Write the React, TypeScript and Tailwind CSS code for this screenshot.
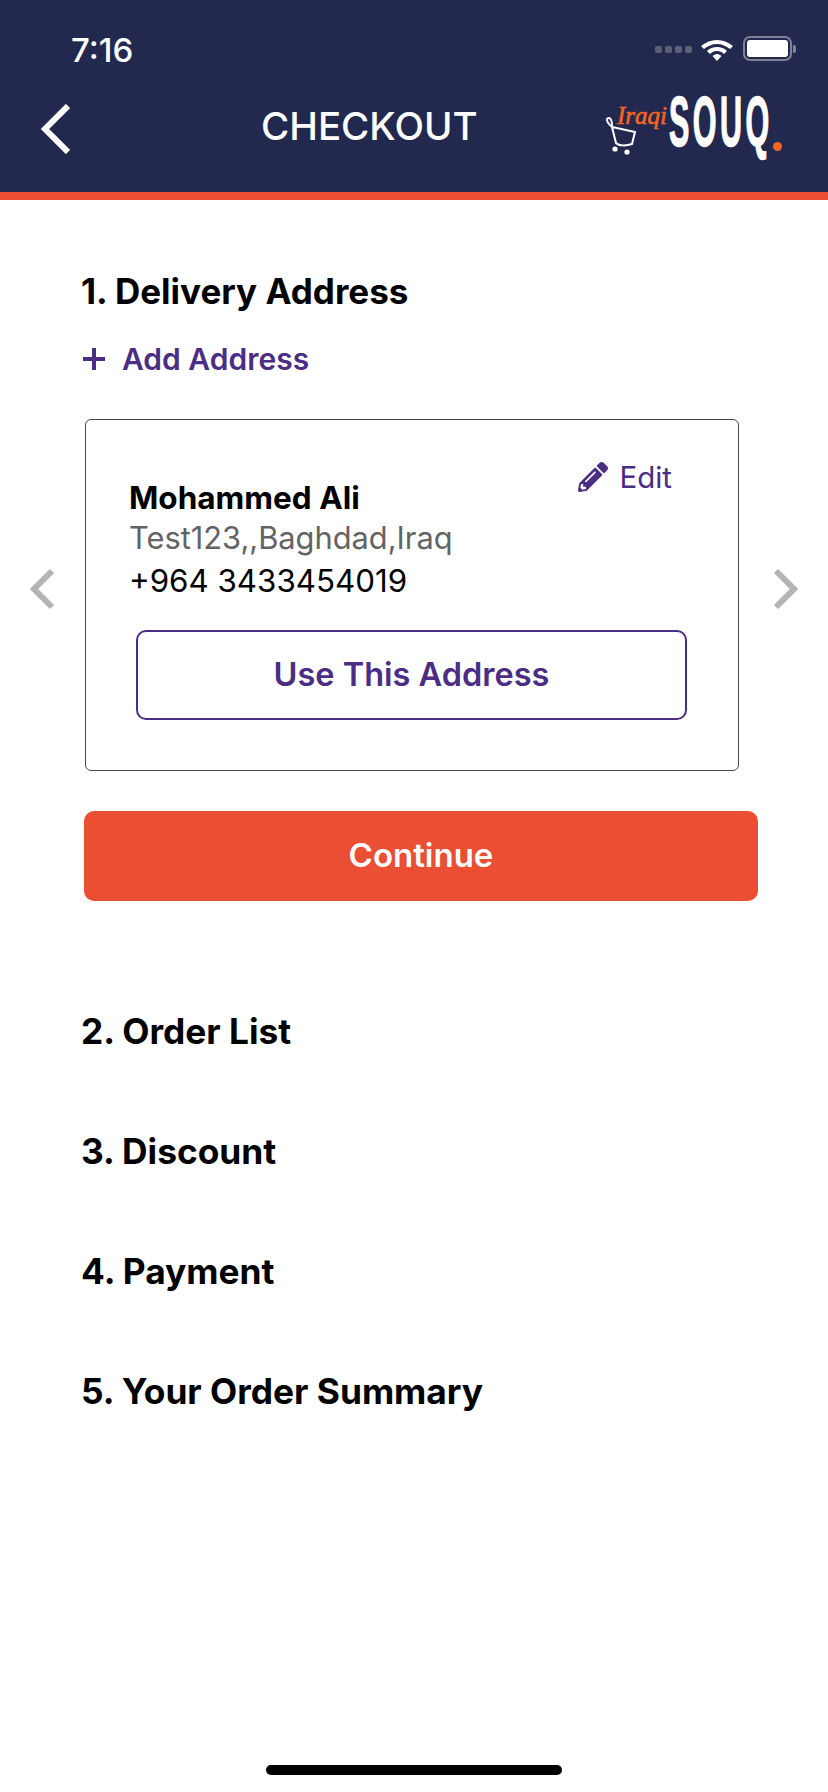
import { FaPencilAlt } from 'react-icons/fa';

const sections = ['2. Order List', '3. Discount', '4. Payment', '5. Your Order Summary'];

function Chevron({ dir, className }: { dir: 'left' | 'right'; className: string }) {
  return (
    <svg width="26" height="42" viewBox="0 0 26 42" fill="none" className={className}>
      <path
        d={dir === 'left' ? 'M23 3 L5 21 L23 39' : 'M3 3 L21 21 L3 39'}
        stroke="currentColor"
        strokeWidth="6"
      />
    </svg>
  );
}

function Logo() {
  return (
    <div className="relative w-[170px] h-[64px] shrink-0">
      <span className="absolute left-[11px] top-[4px] text-[25px] leading-[28px] italic text-[#f26522] [-webkit-text-stroke:0.6px_#f26522] font-['Liberation_Serif',serif]">
        Iraqi
      </span>
      <span className="absolute left-[63px] top-[-16px] text-[71px] leading-[80px] font-bold tracking-[8px] text-white origin-left scale-x-[0.43] [-webkit-text-stroke:1.5px_white] font-['Liberation_Sans',sans-serif]">
        SOUQ
      </span>
      <span className="absolute left-[167px] top-[44px] w-[9px] h-[9px] rounded-full bg-[#f26522]" />
      <svg width="32" height="40" viewBox="0 0 32 40" fill="none" className="absolute left-0 top-[18px]">
        <path
          d="M6 11 C0 6 0 2 3 2 C6 2 6 7 6 11 L29 16 L26 28 C20 30 13 30 10 27 L6 11"
          stroke="white"
          strokeWidth="2"
        />
        <circle cx="9" cy="33" r="2.6" fill="white" />
        <circle cx="21" cy="36" r="2.6" fill="white" />
      </svg>
    </div>
  );
}

export default function App() {
  return (
    <div className="w-[828px] h-[1792px] bg-white flex flex-col font-['Inter',sans-serif] text-black overflow-hidden">
      {/* Header */}
      <div className="h-[200px] shrink-0 bg-[#23294e] border-b-[8px] border-[#ea4e33] text-white">
        <div className="h-[98px] pl-[71px] pr-[32px] pt-[31px] flex items-start justify-between">
          <span className="text-[33px] leading-[38px] font-medium">7:16</span>
          <div className="flex items-center gap-[9px] pt-[5px]">
            <div className="flex gap-[3px] mt-[2px]">
              <span className="w-[7px] h-[7px] rounded-[2px] bg-[#5b6079]" />
              <span className="w-[7px] h-[7px] rounded-[2px] bg-[#5b6079]" />
              <span className="w-[7px] h-[7px] rounded-[2px] bg-[#5b6079]" />
              <span className="w-[7px] h-[7px] rounded-[2px] bg-[#5b6079]" />
            </div>
            <svg width="32" height="24" viewBox="0 0 32 24" fill="white">
              <path d="M16 3 C22 3 27 5 32 9 L29 12 C25 9 21 7 16 7 C11 7 7 9 3 12 L0 9 C5 5 10 3 16 3 Z" />
              <path d="M16 10 C20 10 23 11 26 14 L23 17 C21 15 19 14 16 14 C13 14 11 15 9 17 L6 14 C9 11 12 10 16 10 Z" />
              <path d="M16 17 C18 17 19 18 20.5 19 L16 24 L11.5 19 C13 18 14 17 16 17 Z" />
            </svg>
            <div className="flex items-center gap-[1px] ml-[1px]">
              <div className="w-[49px] h-[25px] rounded-[7px] border-[2px] border-[#7e8296] p-[2px]">
                <div className="w-full h-full rounded-[3px] bg-white" />
              </div>
              <span className="w-[3px] h-[8px] rounded-r-[2px] bg-[#7e8296]" />
            </div>
          </div>
        </div>
        <div className="relative flex items-start justify-between pl-[40px] pr-[52px]">
          <svg width="30" height="50" viewBox="0 0 30 50" fill="none" className="mt-[6px]">
            <path d="M28 2 L5 25 L28 48" stroke="white" strokeWidth="6" />
          </svg>
          <h1 className="absolute left-[261px] top-[5px] text-[38.5px] leading-[46px] font-medium">CHECKOUT</h1>
          <Logo />
        </div>
      </div>

      {/* Delivery address */}
      <div className="pt-[67px] flex flex-col">
        <h2 className="ml-[81px] text-[35px] leading-[48px] font-bold">1. Delivery Address</h2>
        <div className="ml-[83px] mt-[24px] flex items-center gap-[17px] text-[#4b2d83]">
          <svg width="22" height="22" viewBox="0 0 22 22" fill="currentColor">
            <rect x="0" y="9" width="22" height="4" />
            <rect x="9" y="0" width="4" height="22" />
          </svg>
          <span className="text-[30px] leading-[40px] font-semibold">Add Address</span>
        </div>

        <div className="mt-[40px] pl-[29px] flex items-center gap-[32px]">
          <Chevron dir="left" className="text-[#b4b4b8] mb-[12px] shrink-0 -mr-[2px]" />
          <div className="w-[654px] h-[352px] shrink-0 rounded-[6px] border border-[#48484c] pl-[43px] pr-[66px] pt-[38px]">
            <div className="flex justify-end items-center gap-[11px] text-[#4b2d83]">
              <FaPencilAlt size={30} />
              <span className="text-[29.5px] leading-[38px]">Edit</span>
            </div>
            <div className="text-[31px] leading-[44px] mt-[-20px]">
              <div className="font-bold text-[31.5px]">Mohammed Ali</div>
              <div className="text-[#636366] text-[30.8px] mt-[-4px]">Test123,,Baghdad,Iraq</div>
              <div className="text-[31.3px] mt-[-1px]">+964 3433454019</div>
            </div>
            <div className="ml-[7px] mt-[27px] w-[551px] h-[90px] rounded-[10px] border-[2px] border-[#4b2d83] flex items-center justify-center text-[#4b2d83] text-[32.5px] font-semibold">
              Use This Address
            </div>
          </div>
          <Chevron dir="right" className="text-[#b4b4b8] mb-[12px] shrink-0 ml-[2px]" />
        </div>

        <button className="ml-[84px] mt-[40px] w-[674px] h-[90px] rounded-[10px] bg-[#ea4e33] text-white text-[33px] font-semibold">
          Continue
        </button>

        <div className="ml-[81px] mt-[107px] flex flex-col gap-[72px]">
          {sections.map((s) => (
            <h2 key={s} className="text-[35.3px] leading-[48px] font-bold">
              {s}
            </h2>
          ))}
        </div>
      </div>

      {/* Home indicator */}
      <div className="mt-auto mb-[17px] flex justify-center">
        <div className="w-[296px] h-[10px] rounded-full bg-black" />
      </div>
    </div>
  );
}
